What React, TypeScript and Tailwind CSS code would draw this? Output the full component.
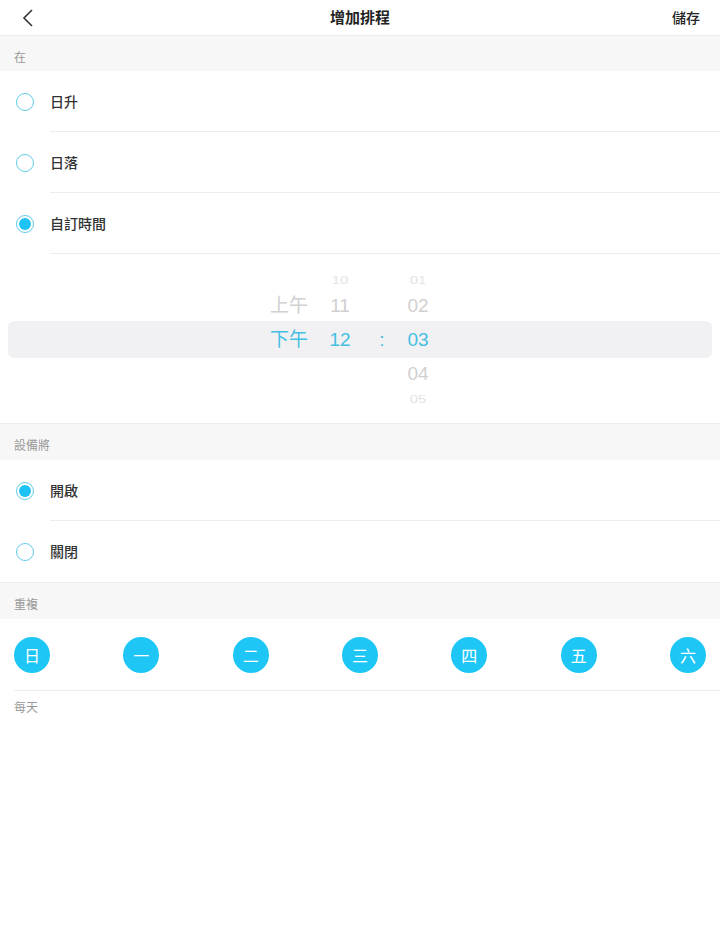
const font = { fontFamily: '"Noto Sans CJK TC", "Noto Sans", sans-serif' };
const pickerFont = { fontFamily: '"Liberation Sans", "Noto Sans CJK TC", sans-serif' };

function Radio({ checked }: { checked?: boolean }) {
  return (
    <div className="w-[18px] h-[18px] rounded-full border-[1.5px] border-[#5fcde8] flex items-center justify-center shrink-0">
      {checked && <div className="w-[12px] h-[12px] rounded-full bg-[#1ec3f5]"></div>}
    </div>
  );
}

function Row({ label, checked, divider = true }: { label: string; checked?: boolean; divider?: boolean }) {
  return (
    <div className="flex items-stretch h-[61px] bg-white">
      <div className="w-[50px] flex items-center pl-4">
        <Radio checked={checked} />
      </div>
      <div className={`flex-1 flex items-center text-[14px] font-medium text-[#333] ${divider ? "border-b border-[#ececec]" : ""}`}>
        {label}
      </div>
    </div>
  );
}

function SectionHeader({ label, h = "h-[36px]" }: { label: string; h?: string }) {
  return (
    <div className={`${h} bg-[#f7f7f7] flex items-center px-[14px] pt-[6px] text-[12px] text-[#999]`}>{label}</div>
  );
}

export default function App() {
  const days = ["日", "一", "二", "三", "四", "五", "六"];
  return (
    <div className="w-[720px] h-[939px] bg-white" style={font}>
      {/* header */}
      <div className="relative h-[36px] flex items-center justify-between border-b border-[#ececec] px-[20px]">
        <svg width="14" height="20" viewBox="0 0 14 20" className="ml-[1px]">
          <path d="M11 2 L3 10 L11 18" fill="none" stroke="#333" strokeWidth="1.6" />
        </svg>
        <div className="absolute left-0 right-0 text-center text-[15px] font-bold text-[#222] pointer-events-none">增加排程</div>
        <div className="text-[14px] font-medium text-[#222]">儲存</div>
      </div>

      <SectionHeader label="在" h="h-[35px]" />
      <Row label="日升" />
      <Row label="日落" />
      <Row label="自訂時間" checked />

      {/* time picker */}
      <div className="relative h-[170px] bg-white border-b border-[#ececec] overflow-hidden">
        <div className="absolute left-[8px] right-[8px] top-[67px] h-[37px] rounded-md bg-[#f1f1f3]"></div>
        <div className="relative flex h-full text-[19px] pl-[261px] pt-[3px]" style={pickerFont}>
          <div className="w-[56px] flex flex-col items-center">
            <div className="h-[34px]"></div>
            <div className="h-[34px] mt-[-2px] flex items-center text-[#d0d0d0]">上午</div>
            <div className="h-[34px] flex items-center text-[#45bfe3]">下午</div>
          </div>
          <div className="w-[46px] flex flex-col items-center">
            <div className="h-[34px] flex items-end text-[#e4e4e4] text-[15px] leading-none scale-y-75 pb-[2px]">10</div>
            <div className="h-[34px] mt-[-2px] flex items-center text-[#d0d0d0]">11</div>
            <div className="h-[34px] flex items-center text-[#45bfe3]">12</div>
          </div>
          <div className="w-[38px] flex flex-col items-center">
            <div className="h-[66px]"></div>
            <div className="h-[34px] flex items-center text-[#45bfe3]">:</div>
          </div>
          <div className="w-[34px] flex flex-col items-center">
            <div className="h-[34px] flex items-end text-[#e4e4e4] text-[15px] leading-none scale-y-75 pb-[2px]">01</div>
            <div className="h-[34px] mt-[-2px] flex items-center text-[#d0d0d0]">02</div>
            <div className="h-[34px] flex items-center text-[#45bfe3]">03</div>
            <div className="h-[34px] flex items-center text-[#d0d0d0]">04</div>
            <div className="h-[20px] flex items-start text-[#e4e4e4] text-[15px] leading-none scale-y-75">05</div>
          </div>
        </div>
      </div>

      <SectionHeader label="設備將" />
      <Row label="開啟" checked />
      <div className="border-b border-[#ececec]">
        <Row label="關閉" divider={false} />
      </div>

      <SectionHeader label="重複" />
      <div className="flex items-center justify-between px-[14px] h-[71px]">
        {days.map((d) => (
          <div key={d} className="w-[36px] h-[36px] rounded-full bg-[#1ec6f6] text-white text-[16px] flex items-center justify-center">
            {d}
          </div>
        ))}
      </div>
      <div className="ml-[14px] border-t border-[#ececec] pt-[7px] text-[12px] text-[#999]">每天</div>
    </div>
  );
}
